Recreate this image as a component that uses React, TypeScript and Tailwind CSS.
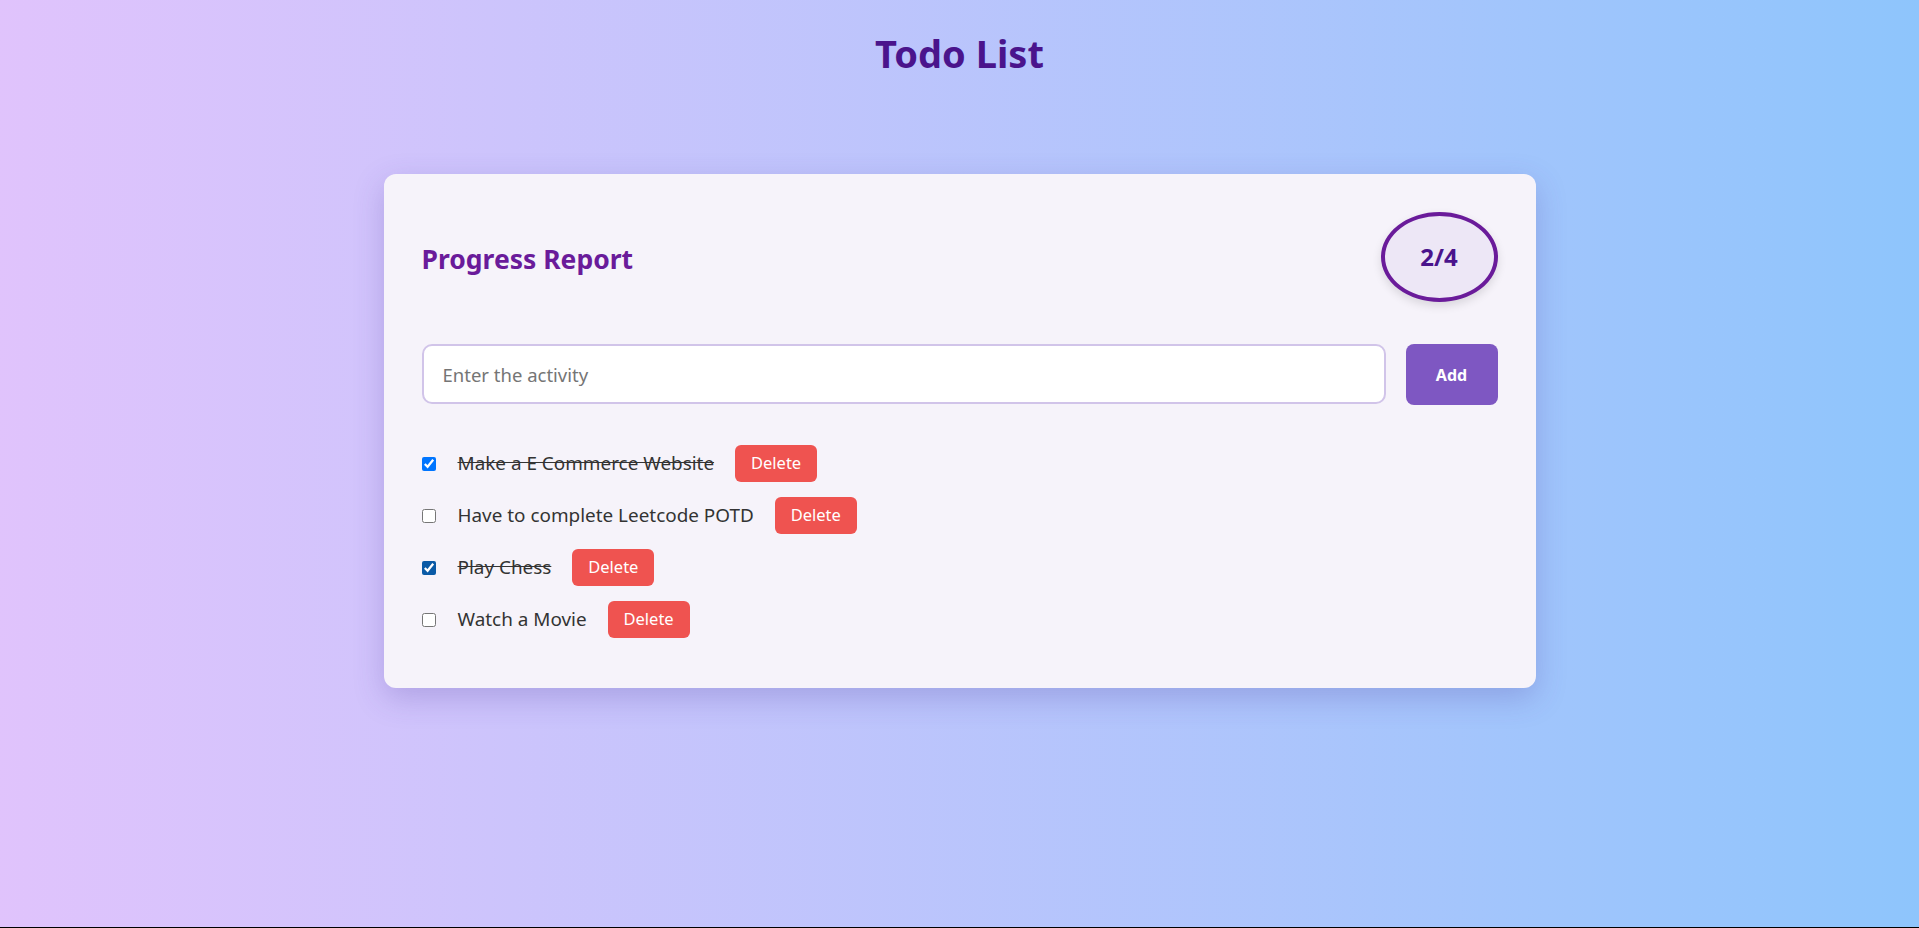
import React from "react";

const todos = [
  { text: "Make a E Commerce Website", done: true, accent: "accent-[#0075ff]" },
  { text: "Have to complete Leetcode POTD", done: false, accent: "" },
  { text: "Play Chess", done: true, accent: "accent-[#0a5aa6]" },
  { text: "Watch a Movie", done: false, accent: "" },
];

export default function App() {
  return (
    <div className="h-[928px] bg-black" style={{ fontFamily: '"Noto Sans", "Open Sans", sans-serif' }}>
      <div className="h-[927px] bg-gradient-to-r from-[#e0c3fc] to-[#8ec5fc] flex flex-col items-center">
        <h1 className="mt-[29px] text-[38px] leading-[48px] font-bold text-[#4a148c]">Todo List</h1>
        <div className="mt-[97px] w-[1152px] rounded-xl bg-[#f6f3fa] p-[38px] shadow-[0_10px_30px_rgba(80,60,160,0.25)]">
          <div className="flex items-center justify-between h-[90px]">
            <h2 className="mt-[5px] text-[26.5px] font-bold text-[#6a1b9a]">Progress Report</h2>
            <div className="w-[117px] h-[90px] rounded-[50%] border-4 border-[#6a1b9a] bg-[#ede7f6] flex items-center justify-center text-[24px] font-bold text-[#4a148c] shadow-[0_4px_10px_rgba(0,0,0,0.12)]">
              2/4
            </div>
          </div>
          <div className="mt-[42px] flex items-start gap-[20px]">
            <input
              className="flex-1 h-[60px] rounded-[10px] border-2 border-[#d1c4e9] bg-white px-[19px] text-[18.5px] text-[#333] placeholder:text-[#757575] outline-none"
              placeholder="Enter the activity"
            />
            <button className="w-[92px] h-[61px] rounded-[8px] bg-[#7e57c2] text-white text-[16px] font-bold">Add</button>
          </div>
          <ul className="mt-[40px] pb-[12px] flex flex-col gap-[15px]">
            {todos.map((t) => (
              <li key={t.text} className="flex items-center h-[37px]">
                <input type="checkbox" defaultChecked={t.done} className={`m-0 w-[14px] h-[14px] ${t.accent}`} />
                <span className={`ml-[22px] text-[18.9px] text-[#333] ${t.done ? "line-through" : ""}`}>{t.text}</span>
                <button className="ml-[21px] w-[82px] h-[37px] rounded-[6px] bg-[#ef5350] text-white text-[16.5px]">Delete</button>
              </li>
            ))}
          </ul>
        </div>
      </div>
    </div>
  );
}
